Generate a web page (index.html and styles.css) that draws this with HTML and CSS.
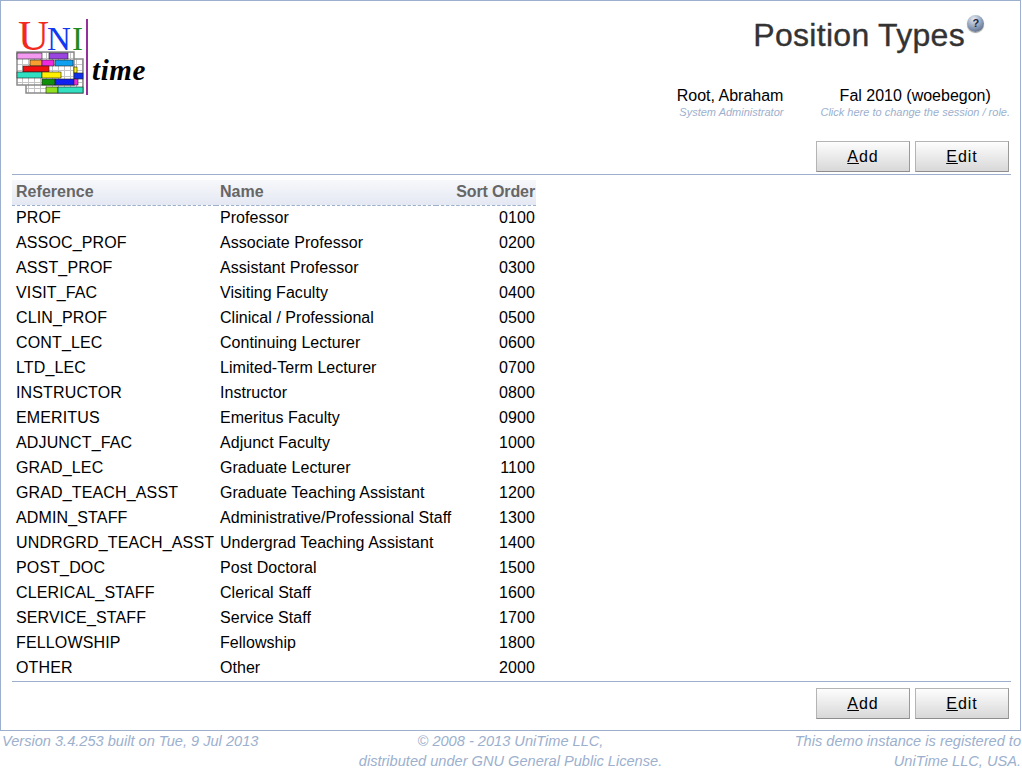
FILE: index.html
```html
<!DOCTYPE html>
<html lang="en">
<head>
<meta charset="utf-8">
<title>Position Types</title>
<link rel="stylesheet" href="styles.css">
</head>
<body>
<div class="frame">
  <header class="header">
    <svg class="logo" width="136" height="92" viewBox="0 -12 136 92" xmlns="http://www.w3.org/2000/svg">
      <defs>
        <pattern id="cells" x="1" y="34" width="6" height="6" patternUnits="userSpaceOnUse">
          <rect width="6" height="6" fill="#fff"/>
          <path d="M5.5 0V6M0 5.5H6" stroke="#c4c4c4" stroke-width="1" fill="none"/>
        </pattern>
      </defs>
      <text y="31" class="lg-letters"><tspan x="2" class="lg-u">U</tspan><tspan x="31" class="lg-n">N</tspan><tspan x="56" class="lg-i">I</tspan></text>
      <rect x="70" y="0" width="2" height="76" fill="#93309a"/>
      <g stroke="#8a8a8a" stroke-width="1.5" fill="url(#cells)">
        <rect x="10" y="40" width="57" height="34"/>
        <rect x="1" y="33" width="57" height="33"/>
      </g>
      <g stroke="#222" stroke-width=".6">
        <rect x="1" y="34" width="25" height="6" fill="#f39af0"/>
        <rect x="33" y="34" width="19" height="6" fill="#9b45e0"/>
        <rect x="14" y="41" width="12" height="6" fill="#f7a030"/>
        <rect x="26" y="41" width="12" height="6" fill="#f028e0"/>
        <rect x="39" y="41" width="18" height="6" fill="#10a0f0"/>
        <rect x="7" y="47" width="26" height="6" fill="#f01010"/>
        <rect x="58" y="48" width="3" height="6" fill="#fff000"/>
        <rect x="1" y="53" width="25" height="6" fill="#30e0c0"/>
        <rect x="26" y="53" width="19" height="6" fill="#fff000"/>
        <rect x="58" y="54" width="9" height="6" fill="#1030f0"/>
        <rect x="26" y="60" width="13" height="6" fill="#10900a"/>
        <rect x="39" y="60" width="19" height="6" fill="#1020f0"/>
        <rect x="58" y="60" width="4" height="6" fill="#f028e0"/>
        <rect x="30" y="68" width="12" height="6" fill="#90e020"/>
        <rect x="42" y="68" width="25" height="6" fill="#30e0c0"/>
      </g>
      <text x="76" y="61" class="lg-t">time</text>
    </svg>
    <div class="head-right">
      <div class="title-row">
        <h1 class="title">Position Types</h1>
        <span class="help">?</span>
      </div>
      <div class="info">
        <div class="user">
          <div class="info-main">Root, Abraham</div>
          <div class="info-sub">System Administrator</div>
        </div>
        <div class="session">
          <div class="info-main">Fal 2010 (woebegon)</div>
          <div class="info-sub">Click here to change the session / role.</div>
        </div>
      </div>
    </div>
  </header>

  <div class="toolbar top">
    <button class="btn"><u>A</u>dd</button>
    <button class="btn"><u>E</u>dit</button>
  </div>

  <table class="grid">
    <thead>
      <tr><th>Reference</th><th>Name</th><th class="num">Sort Order</th></tr>
    </thead>
    <tbody>
      <tr><td>PROF</td><td>Professor</td><td class="num">0100</td></tr>
      <tr><td>ASSOC_PROF</td><td>Associate Professor</td><td class="num">0200</td></tr>
      <tr><td>ASST_PROF</td><td>Assistant Professor</td><td class="num">0300</td></tr>
      <tr><td>VISIT_FAC</td><td>Visiting Faculty</td><td class="num">0400</td></tr>
      <tr><td>CLIN_PROF</td><td>Clinical / Professional</td><td class="num">0500</td></tr>
      <tr><td>CONT_LEC</td><td>Continuing Lecturer</td><td class="num">0600</td></tr>
      <tr><td>LTD_LEC</td><td>Limited-Term Lecturer</td><td class="num">0700</td></tr>
      <tr><td>INSTRUCTOR</td><td>Instructor</td><td class="num">0800</td></tr>
      <tr><td>EMERITUS</td><td>Emeritus Faculty</td><td class="num">0900</td></tr>
      <tr><td>ADJUNCT_FAC</td><td>Adjunct Faculty</td><td class="num">1000</td></tr>
      <tr><td>GRAD_LEC</td><td>Graduate Lecturer</td><td class="num">1100</td></tr>
      <tr><td>GRAD_TEACH_ASST</td><td>Graduate Teaching Assistant</td><td class="num">1200</td></tr>
      <tr><td>ADMIN_STAFF</td><td>Administrative/Professional Staff</td><td class="num">1300</td></tr>
      <tr><td>UNDRGRD_TEACH_ASST</td><td>Undergrad Teaching Assistant</td><td class="num">1400</td></tr>
      <tr><td>POST_DOC</td><td>Post Doctoral</td><td class="num">1500</td></tr>
      <tr><td>CLERICAL_STAFF</td><td>Clerical Staff</td><td class="num">1600</td></tr>
      <tr><td>SERVICE_STAFF</td><td>Service Staff</td><td class="num">1700</td></tr>
      <tr><td>FELLOWSHIP</td><td>Fellowship</td><td class="num">1800</td></tr>
      <tr><td>OTHER</td><td>Other</td><td class="num">2000</td></tr>
    </tbody>
  </table>

  <div class="toolbar bottom">
    <button class="btn"><u>A</u>dd</button>
    <button class="btn"><u>E</u>dit</button>
  </div>
</div>
<footer class="footer">
  <div class="foot-left">Version 3.4.253 built on Tue, 9 Jul 2013</div>
  <div class="foot-center">© 2008 - 2013 UniTime LLC,<br>distributed under GNU General Public License.</div>
  <div class="foot-right">This demo instance is registered to<br>UniTime LLC, USA.</div>
</footer>
</body>
</html>
```
FILE: styles.css
```css
* { box-sizing: border-box; }
html, body { margin: 0; padding: 0; }
body {
  width: 1022px;
  height: 774px;
  overflow: hidden;
  background: #fff;
  color: #000;
  font-family: "Liberation Sans", Arial, sans-serif;
  font-size: 16px;
}
.frame {
  width: 1021px;
  height: 731px;
  border: 1px solid #9cb0ce;
  padding: 0 10px 0 11px;
}
.header {
  display: flex;
  justify-content: space-between;
  height: 140px;
}
.logo { margin: 6px 0 0 4px; flex: none; }
.lg-letters { font-family: "Liberation Serif", serif; }
.lg-u { fill: #f2291c; font-size: 43px; }
.lg-n { fill: #1238f0; font-size: 33px; }
.lg-i { fill: #1f8a1f; font-size: 33px; }
.lg-t { font-family: "Liberation Serif", serif; font-style: italic; font-weight: 700; font-size: 29px; fill: #000; letter-spacing: .6px; }
.head-right { display: flex; flex-direction: column; align-items: flex-end; }
.title-row { display: flex; align-items: flex-start; margin: 14px 45px 0 0; position: relative; }
.title {
  margin: 0;
  font-size: 32px;
  font-weight: 400;
  line-height: 40px;
  letter-spacing: .3px;
  color: #333;
  -webkit-text-stroke: .35px #333;
}
.help {
  position: absolute;
  left: 214px;
  top: 0;
  width: 17px;
  height: 17px;
  border-radius: 50%;
  background: radial-gradient(circle at 40% 25%, #e6ebf2, #8697b3 55%, #46526a);
  box-shadow: 0 1px 1px #999;
  color: #1d2438;
  font-size: 11px;
  font-weight: 700;
  line-height: 16px;
  text-align: center;
}
.info { display: flex; margin-top: 32px; }
.user { text-align: right; margin-right: 37px; }
.session { text-align: center; }
.info-main { font-size: 16px; line-height: 18px; }
.info-sub { font-size: 11px; line-height: 13px; margin-top: 1px; font-style: italic; color: #9cb0ce; }
.toolbar { display: flex; justify-content: flex-end; gap: 5px; margin-right: -1px; padding-right: 2px; }
.toolbar.top { height: 34px; border-bottom: 1px solid #9cb0ce; }
.toolbar.bottom { border-top: 1px solid #9cb0ce; padding-top: 6px; margin-top: 1px; }
.btn {
  width: 94px;
  height: 31px;
  padding: 0;
  border: 1px solid #b4b4b4;
  border-bottom-color: #8e8e8e;
  border-right-color: #9a9a9a;
  border-radius: 0;
  background: linear-gradient(#fdfdfd, #d8d8d8);
  color: #000;
  font-family: "Liberation Sans", Arial, sans-serif;
  font-size: 16px;
  letter-spacing: 1px;
  text-align: center;
}
.grid { border-collapse: collapse; margin: 5px 0 0; width: 524px; table-layout: fixed; letter-spacing: .04px; }
.grid th:nth-child(1), .grid td:nth-child(1) { width: 204px; }
.grid td:nth-child(1) { letter-spacing: .14px; }
.grid td:nth-child(3) { letter-spacing: .1px; }
.grid th:nth-child(2), .grid td:nth-child(2) { width: 220px; }
.grid th {
  height: 25px;
  padding: 0 1px 0 4px;
  text-align: left;
  font-weight: 700;
  color: #666;
  background: linear-gradient(#f7f8fb, #e4e8f2);
  border-bottom: 1px dashed #9cb0ce;
}
.grid th.num { letter-spacing: -.12px; }
.grid td { height: 25px; padding: 0 1px 0 4px; white-space: nowrap; }
.grid .num { text-align: right; }
.footer {
  display: flex;
  justify-content: space-between;
  padding: 0 1px 0 2px;
  font-size: 14.6px;
  font-style: italic;
  line-height: 20px;
  color: #9cb0ce;
}
.foot-left { width: 340px; }
.foot-center { text-align: center; width: 340px; margin-left: -2px; }
.foot-right { text-align: right; width: 340px; }
```
